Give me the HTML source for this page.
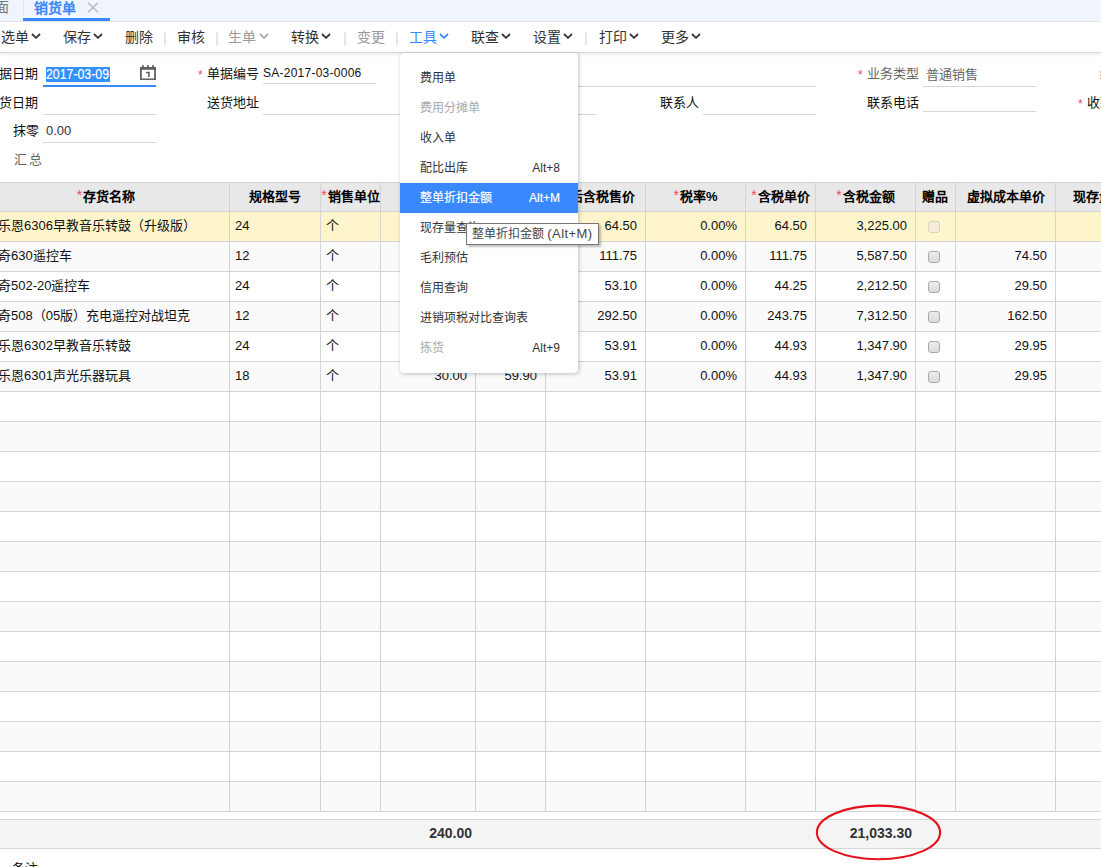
<!DOCTYPE html>
<html lang="zh-CN">
<head>
<meta charset="utf-8">
<style>
*{box-sizing:border-box;margin:0;padding:0}
html,body{width:1101px;height:867px;overflow:hidden;background:#fff}
body{position:relative;font-family:"Liberation Sans",sans-serif;font-size:13px;color:#333}
.a{position:absolute;white-space:nowrap}
/* tab bar */
#tabs{position:absolute;left:0;top:0;width:1101px;height:22px;background:#f0f5fd;border-bottom:1px solid #e3e4ee}
/* toolbar */
#tb{position:absolute;left:0;top:22px;width:1101px;height:30px;background:#fff;box-shadow:0 1px 0 #dadada,0 2px 4px rgba(0,0,0,.10)}
#tb .t{position:absolute;top:0;line-height:30px;font-size:14px;color:#333;white-space:nowrap}
#tb .g{color:#999}
#tb .bl{color:#3a88fd}
#tb .sep{position:absolute;top:10px;width:2px;height:13px;background:#e3e5f0}
.chev{position:absolute;top:11px;width:10px;height:6px}
/* form */
.lbl{position:absolute;font-size:13px;line-height:16px;color:#111;white-space:nowrap}
.ul{position:absolute;height:1px;background:#d6d6d6}
.req{color:#f5475d}
/* grid */
#grid{position:absolute;left:0;top:0;width:1101px;height:867px}
.hl{position:absolute;left:0;width:1101px;height:1px;background:#d4d4d4}
.vl{position:absolute;width:1px;background:#d4d4d4}
.cell{position:absolute;font-size:13px;line-height:28px;white-space:nowrap;color:#111}
.r{text-align:right}
.hd{font-weight:bold;text-align:center;color:#000}
.cb{position:absolute;width:12px;height:12px;border:1px solid #a9a9a9;border-radius:3px;background:linear-gradient(#ececec,#dcdcdc)}
/* menu */
#menu{position:absolute;left:400px;top:53px;width:178px;height:320px;background:#fff;border-radius:4px;box-shadow:1px 1px 4px rgba(40,50,70,.28),0 0 1px rgba(0,0,0,.12)}
#menu .mi{position:absolute;left:0;width:178px;height:30px;line-height:30px;padding-left:20px;font-size:12px;color:#333;white-space:nowrap}
#menu .mi .k{position:absolute;right:18px;top:0}
#menu .dis{color:#a8a8a8}
#menu .on{background:#3a88fd;color:#fff;-webkit-text-stroke:0.2px #fff}
#tip{position:absolute;left:466px;top:223px;width:133px;height:22px;background:#fff;border:1px solid #777;box-shadow:2px 2px 2px rgba(0,0,0,.25);font-size:12px;line-height:20px;padding-left:5px;color:#444;white-space:nowrap}
</style>
</head>
<body>
<div id="tabs">
  <div class="a" style="left:-5px;top:0;font-size:14px;line-height:15px;color:#777">面</div>
  <div class="a" style="left:23px;top:0;width:1px;height:15px;background:#dfe3ea"></div>
  <div class="a" style="left:34px;top:1px;font-size:14px;line-height:15px;color:#3a88fd;font-weight:bold">销货单</div>
  <svg class="a" style="left:87px;top:2px" width="12" height="11" viewBox="0 0 12 11"><path d="M1 0.8L11 10.2M11 0.8L1 10.2" stroke="#b8b8b8" stroke-width="1.4"/></svg>
  <div class="a" style="left:23px;top:18px;width:87px;height:3px;background:#3a88fd"></div>
</div>

<div id="tb">
  <div class="t" style="left:1px">选单</div>
  <div class="t" style="left:63px">保存</div>
  <div class="t" style="left:125px">删除</div>
  <div class="sep" style="left:164px"></div>
  <div class="t" style="left:177px">审核</div>
  <div class="sep" style="left:216px"></div>
  <div class="t g" style="left:228px">生单</div>
  <div class="t" style="left:291px">转换</div>
  <div class="sep" style="left:344px"></div>
  <div class="t g" style="left:357px">变更</div>
  <div class="sep" style="left:396px"></div>
  <div class="t bl" style="left:409px">工具</div>
  <div class="t" style="left:471px">联查</div>
  <div class="t" style="left:533px">设置</div>
  <div class="sep" style="left:585px"></div>
  <div class="t" style="left:599px">打印</div>
  <div class="t" style="left:661px">更多</div>
  <svg class="chev" style="left:31px" viewBox="0 0 10 6"><path d="M1 1L5 4.8L9 1" fill="none" stroke="#333" stroke-width="1.8"/></svg>
  <svg class="chev" style="left:93px" viewBox="0 0 10 6"><path d="M1 1L5 4.8L9 1" fill="none" stroke="#333" stroke-width="1.8"/></svg>
  <svg class="chev" style="left:259px" viewBox="0 0 10 6"><path d="M1 1L5 4.8L9 1" fill="none" stroke="#aaa" stroke-width="1.8"/></svg>
  <svg class="chev" style="left:321px" viewBox="0 0 10 6"><path d="M1 1L5 4.8L9 1" fill="none" stroke="#333" stroke-width="1.8"/></svg>
  <svg class="chev" style="left:439px" viewBox="0 0 10 6"><path d="M1 1L5 4.8L9 1" fill="none" stroke="#3a88fd" stroke-width="1.8"/></svg>
  <svg class="chev" style="left:501px" viewBox="0 0 10 6"><path d="M1 1L5 4.8L9 1" fill="none" stroke="#333" stroke-width="1.8"/></svg>
  <svg class="chev" style="left:563px" viewBox="0 0 10 6"><path d="M1 1L5 4.8L9 1" fill="none" stroke="#333" stroke-width="1.8"/></svg>
  <svg class="chev" style="left:629px" viewBox="0 0 10 6"><path d="M1 1L5 4.8L9 1" fill="none" stroke="#333" stroke-width="1.8"/></svg>
  <svg class="chev" style="left:691px" viewBox="0 0 10 6"><path d="M1 1L5 4.8L9 1" fill="none" stroke="#333" stroke-width="1.8"/></svg>
</div>

<div id="form">
<div class="lbl" style="left:-14px;top:66px;color:#111;font-size:13px">单据日期</div>
<div class="a" style="left:46px;top:67px;width:64px;height:15px;background:#3390ff"></div>
<div class="a" style="left:46px;top:66px;font-size:14px;line-height:16px;color:#fff;transform:scaleX(0.88);transform-origin:0 0;-webkit-text-stroke:0.15px #fff">2017-03-09</div>
<svg class="a" style="left:140px;top:65px" width="16" height="16" viewBox="0 0 16 16" fill="#606060"><rect x="0" y="2" width="1.8" height="13"/><rect x="14.1" y="2" width="1.8" height="13"/><rect x="0" y="2" width="16" height="2.8"/><rect x="0" y="13.5" width="16" height="1.5"/><rect x="2" y="0.2" width="1.8" height="2"/><rect x="7" y="0.2" width="1.8" height="2"/><rect x="12.1" y="0.2" width="1.8" height="2"/><rect x="6" y="6.8" width="3.7" height="1.5"/><rect x="8.1" y="6.8" width="1.6" height="5.2"/></svg>
<div class="ul" style="left:43px;top:85px;width:113px;height:2px;background:#3a88fd"></div>
<div class="a req" style="left:198px;top:69px;font-size:12px;line-height:12px">*</div>
<div class="lbl" style="left:207px;top:66px;color:#111;font-size:13px">单据编号</div>
<div class="a" style="left:263px;top:66px;font-size:12px;line-height:15px;color:#111;letter-spacing:0.25px">SA-2017-03-0006</div>
<div class="ul" style="left:263px;top:83px;width:113px;height:1px;background:#d6d6d6"></div>
<div class="ul" style="left:578px;top:86px;width:238px;height:1px;background:#d6d6d6"></div>
<div class="a req" style="left:858px;top:69px;font-size:12px;line-height:12px">*</div>
<div class="lbl" style="left:867px;top:66px;color:#666;font-size:13px">业务类型</div>
<div class="lbl" style="left:926px;top:67px;color:#666;font-size:13px">普通销售</div>
<div class="ul" style="left:923px;top:86px;width:113px;height:1px;background:#d6d6d6"></div>
<div class="lbl" style="left:1100px;top:66px;color:#111;font-size:13px">结算方式</div>
<div class="lbl" style="left:-14px;top:95px;color:#111;font-size:13px">发货日期</div>
<div class="ul" style="left:43px;top:114px;width:113px;height:1px;background:#d6d6d6"></div>
<div class="lbl" style="left:207px;top:95px;color:#111;font-size:13px">送货地址</div>
<div class="ul" style="left:263px;top:114px;width:333px;height:1px;background:#d6d6d6"></div>
<div class="lbl" style="left:660px;top:95px;color:#111;font-size:13px">联系人</div>
<div class="ul" style="left:703px;top:114px;width:113px;height:1px;background:#d6d6d6"></div>
<div class="lbl" style="left:867px;top:95px;color:#111;font-size:13px">联系电话</div>
<div class="ul" style="left:923px;top:111px;width:113px;height:1px;background:#d6d6d6"></div>
<div class="a req" style="left:1078px;top:98px;font-size:12px;line-height:12px">*</div>
<div class="lbl" style="left:1087px;top:95px;color:#111;font-size:13px">收款</div>
<div class="lbl" style="left:13px;top:123px;color:#111;font-size:13px">抹零</div>
<div class="a" style="left:46px;top:123px;font-size:13px;line-height:16px;color:#333">0.00</div>
<div class="ul" style="left:43px;top:142px;width:113px;height:1px;background:#d6d6d6"></div>
<div class="lbl" style="left:14px;top:152px;color:#666;letter-spacing:1.5px">汇总</div>
</div>
<div id="grid">
<div class="a" style="left:0;top:183px;width:1101px;height:28px;background:#e8e8e8"></div>
<div class="a" style="left:0;top:212px;width:1101px;height:29px;background:#fff5cc"></div>
<div class="a" style="left:0;top:242px;width:1101px;height:29px;background:#fafafa"></div>
<div class="a" style="left:0;top:272px;width:1101px;height:29px;background:#fff"></div>
<div class="a" style="left:0;top:302px;width:1101px;height:29px;background:#fafafa"></div>
<div class="a" style="left:0;top:332px;width:1101px;height:29px;background:#fff"></div>
<div class="a" style="left:0;top:362px;width:1101px;height:29px;background:#fafafa"></div>
<div class="a" style="left:0;top:392px;width:1101px;height:29px;background:#fff"></div>
<div class="a" style="left:0;top:422px;width:1101px;height:29px;background:#fafafa"></div>
<div class="a" style="left:0;top:452px;width:1101px;height:29px;background:#fff"></div>
<div class="a" style="left:0;top:482px;width:1101px;height:29px;background:#fafafa"></div>
<div class="a" style="left:0;top:512px;width:1101px;height:29px;background:#fff"></div>
<div class="a" style="left:0;top:542px;width:1101px;height:29px;background:#fafafa"></div>
<div class="a" style="left:0;top:572px;width:1101px;height:29px;background:#fff"></div>
<div class="a" style="left:0;top:602px;width:1101px;height:29px;background:#fafafa"></div>
<div class="a" style="left:0;top:632px;width:1101px;height:29px;background:#fff"></div>
<div class="a" style="left:0;top:662px;width:1101px;height:29px;background:#fafafa"></div>
<div class="a" style="left:0;top:692px;width:1101px;height:29px;background:#fff"></div>
<div class="a" style="left:0;top:722px;width:1101px;height:29px;background:#fafafa"></div>
<div class="a" style="left:0;top:752px;width:1101px;height:29px;background:#fff"></div>
<div class="a" style="left:0;top:782px;width:1101px;height:29px;background:#fafafa"></div>
<div class="hl" style="top:182px"></div>
<div class="hl" style="top:211px"></div>
<div class="hl" style="top:241px"></div>
<div class="hl" style="top:271px"></div>
<div class="hl" style="top:301px"></div>
<div class="hl" style="top:331px"></div>
<div class="hl" style="top:361px"></div>
<div class="hl" style="top:391px"></div>
<div class="hl" style="top:421px"></div>
<div class="hl" style="top:451px"></div>
<div class="hl" style="top:481px"></div>
<div class="hl" style="top:511px"></div>
<div class="hl" style="top:541px"></div>
<div class="hl" style="top:571px"></div>
<div class="hl" style="top:601px"></div>
<div class="hl" style="top:631px"></div>
<div class="hl" style="top:661px"></div>
<div class="hl" style="top:691px"></div>
<div class="hl" style="top:721px"></div>
<div class="hl" style="top:751px"></div>
<div class="hl" style="top:781px"></div>
<div class="hl" style="top:811px"></div>
<div class="vl" style="left:229px;top:182px;height:630px"></div>
<div class="vl" style="left:320px;top:182px;height:630px"></div>
<div class="vl" style="left:380px;top:182px;height:630px"></div>
<div class="vl" style="left:475px;top:182px;height:630px"></div>
<div class="vl" style="left:545px;top:182px;height:630px"></div>
<div class="vl" style="left:645px;top:182px;height:630px"></div>
<div class="vl" style="left:745px;top:182px;height:630px"></div>
<div class="vl" style="left:815px;top:182px;height:630px"></div>
<div class="vl" style="left:915px;top:182px;height:630px"></div>
<div class="vl" style="left:955px;top:182px;height:630px"></div>
<div class="vl" style="left:1055px;top:182px;height:630px"></div>
<div class="cell hd" style="left:-17px;top:183px;width:246px"><span class="req" style="font-weight:normal;font-size:14px;line-height:10px;position:relative;top:-1px;margin-right:1px">*</span>存货名称</div>
<div class="cell hd" style="left:230px;top:183px;width:90px">规格型号</div>
<div class="cell hd" style="left:321px;top:183px;width:59px"><span class="req" style="font-weight:normal;font-size:14px;line-height:10px;position:relative;top:-1px;margin-right:1px">*</span>销售单位</div>
<div class="cell hd" style="left:381px;top:183px;width:94px"><span class="req" style="font-weight:normal;font-size:14px;line-height:10px;position:relative;top:-1px;margin-right:1px">*</span>数量</div>
<div class="cell hd" style="left:476px;top:183px;width:69px">单价</div>
<div class="cell hd" style="left:546px;top:183px;width:99px">折后含税售价</div>
<div class="cell hd" style="left:646px;top:183px;width:99px"><span class="req" style="font-weight:normal;font-size:14px;line-height:10px;position:relative;top:-1px;margin-right:1px">*</span>税率%</div>
<div class="cell hd" style="left:746px;top:183px;width:69px"><span class="req" style="font-weight:normal;font-size:14px;line-height:10px;position:relative;top:-1px;margin-right:1px">*</span>含税单价</div>
<div class="cell hd" style="left:816px;top:183px;width:99px"><span class="req" style="font-weight:normal;font-size:14px;line-height:10px;position:relative;top:-1px;margin-right:1px">*</span>含税金额</div>
<div class="cell hd" style="left:914px;top:183px;width:41px">赠品</div>
<div class="cell hd" style="left:956px;top:183px;width:99px">虚拟成本单价</div>
<div class="cell hd" style="left:1073px;top:183px;text-align:left">现存量</div>
<div class="cell" style="left:-2px;top:212px">乐恩6306早教音乐转鼓（升级版）</div>
<div class="cell" style="left:235px;top:212px">24</div>
<div class="cell" style="left:326px;top:212px">个</div>
<div class="cell r" style="left:381px;top:212px;width:86px">50.00</div>
<div class="cell r" style="left:476px;top:212px;width:61px">64.50</div>
<div class="cell r" style="left:546px;top:212px;width:91px">64.50</div>
<div class="cell r" style="left:646px;top:212px;width:91px">0.00%</div>
<div class="cell r" style="left:746px;top:212px;width:61px">64.50</div>
<div class="cell r" style="left:816px;top:212px;width:91px">3,225.00</div>
<div class="cell r" style="left:956px;top:212px;width:91px"></div>
<div class="cb" style="left:928px;top:221px;border-color:#d8d3c2;background:#f3edd9"></div>
<div class="cell" style="left:-2px;top:242px">奇630遥控车</div>
<div class="cell" style="left:235px;top:242px">12</div>
<div class="cell" style="left:326px;top:242px">个</div>
<div class="cell r" style="left:381px;top:242px;width:86px">50.00</div>
<div class="cell r" style="left:476px;top:242px;width:61px">111.75</div>
<div class="cell r" style="left:546px;top:242px;width:91px">111.75</div>
<div class="cell r" style="left:646px;top:242px;width:91px">0.00%</div>
<div class="cell r" style="left:746px;top:242px;width:61px">111.75</div>
<div class="cell r" style="left:816px;top:242px;width:91px">5,587.50</div>
<div class="cell r" style="left:956px;top:242px;width:91px">74.50</div>
<div class="cb" style="left:928px;top:251px"></div>
<div class="cell" style="left:-2px;top:272px">奇502-20遥控车</div>
<div class="cell" style="left:235px;top:272px">24</div>
<div class="cell" style="left:326px;top:272px">个</div>
<div class="cell r" style="left:381px;top:272px;width:86px">50.00</div>
<div class="cell r" style="left:476px;top:272px;width:61px">53.10</div>
<div class="cell r" style="left:546px;top:272px;width:91px">53.10</div>
<div class="cell r" style="left:646px;top:272px;width:91px">0.00%</div>
<div class="cell r" style="left:746px;top:272px;width:61px">44.25</div>
<div class="cell r" style="left:816px;top:272px;width:91px">2,212.50</div>
<div class="cell r" style="left:956px;top:272px;width:91px">29.50</div>
<div class="cb" style="left:928px;top:281px"></div>
<div class="cell" style="left:-2px;top:302px">奇508（05版）充电遥控对战坦克</div>
<div class="cell" style="left:235px;top:302px">12</div>
<div class="cell" style="left:326px;top:302px">个</div>
<div class="cell r" style="left:381px;top:302px;width:86px">30.00</div>
<div class="cell r" style="left:476px;top:302px;width:61px">292.50</div>
<div class="cell r" style="left:546px;top:302px;width:91px">292.50</div>
<div class="cell r" style="left:646px;top:302px;width:91px">0.00%</div>
<div class="cell r" style="left:746px;top:302px;width:61px">243.75</div>
<div class="cell r" style="left:816px;top:302px;width:91px">7,312.50</div>
<div class="cell r" style="left:956px;top:302px;width:91px">162.50</div>
<div class="cb" style="left:928px;top:311px"></div>
<div class="cell" style="left:-2px;top:332px">乐恩6302早教音乐转鼓</div>
<div class="cell" style="left:235px;top:332px">24</div>
<div class="cell" style="left:326px;top:332px">个</div>
<div class="cell r" style="left:381px;top:332px;width:86px">25.00</div>
<div class="cell r" style="left:476px;top:332px;width:61px">53.91</div>
<div class="cell r" style="left:546px;top:332px;width:91px">53.91</div>
<div class="cell r" style="left:646px;top:332px;width:91px">0.00%</div>
<div class="cell r" style="left:746px;top:332px;width:61px">44.93</div>
<div class="cell r" style="left:816px;top:332px;width:91px">1,347.90</div>
<div class="cell r" style="left:956px;top:332px;width:91px">29.95</div>
<div class="cb" style="left:928px;top:341px"></div>
<div class="cell" style="left:-2px;top:362px">乐恩6301声光乐器玩具</div>
<div class="cell" style="left:235px;top:362px">18</div>
<div class="cell" style="left:326px;top:362px">个</div>
<div class="cell r" style="left:381px;top:362px;width:86px">30.00</div>
<div class="cell r" style="left:476px;top:362px;width:61px">59.90</div>
<div class="cell r" style="left:546px;top:362px;width:91px">53.91</div>
<div class="cell r" style="left:646px;top:362px;width:91px">0.00%</div>
<div class="cell r" style="left:746px;top:362px;width:61px">44.93</div>
<div class="cell r" style="left:816px;top:362px;width:91px">1,347.90</div>
<div class="cell r" style="left:956px;top:362px;width:91px">29.95</div>
<div class="cb" style="left:928px;top:371px"></div>
<div class="a" style="left:0;top:819px;width:1101px;height:30px;background:#f4f4f4;border-top:1px solid #d4d4d4;border-bottom:1px solid #d4d4d4"></div>
<div class="cell r" style="left:380px;top:819px;width:92px;font-weight:bold;color:#333;line-height:28px;font-size:14px">240.00</div>
<div class="cell r" style="left:815px;top:819px;width:97px;font-weight:bold;color:#333;line-height:28px;font-size:14px">21,033.30</div>
<div class="lbl" style="left:12px;top:861px">备注</div>
<svg class="a" style="left:0;top:0" width="1101" height="867"><ellipse cx="878.5" cy="832.4" rx="61.6" ry="26.8" fill="none" stroke="#e5101c" stroke-width="2.1"/></svg>
</div>
<div id="menu">
<div class="mi " style="top:10px">费用单</div>
<div class="mi dis" style="top:40px">费用分摊单</div>
<div class="mi " style="top:70px">收入单</div>
<div class="mi " style="top:100px">配比出库<span class="k" style="color:#333">Alt+8</span></div>
<div class="mi on" style="top:130px">整单折扣金额<span class="k" style="color:#fff">Alt+M</span></div>
<div class="mi " style="top:160px">现存量查询</div>
<div class="mi " style="top:190px">毛利预估</div>
<div class="mi " style="top:220px">信用查询</div>
<div class="mi " style="top:250px">进销项税对比查询表</div>
<div class="mi dis" style="top:280px">拣货<span class="k" style="color:#333">Alt+9</span></div>
</div>
<div id="tip">整单折扣金额 <span style="font-size:13px;letter-spacing:0.4px">(Alt+M)</span></div>
</body>
</html>
